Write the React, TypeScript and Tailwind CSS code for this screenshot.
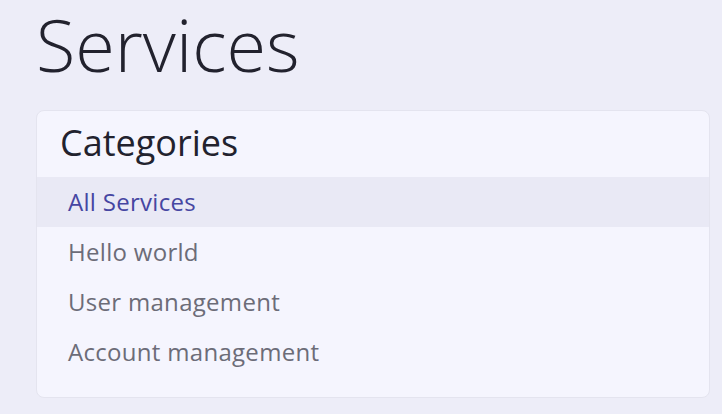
const CATEGORIES = ["All Services", "Hello world", "User management", "Account management"];

export default function App() {
  const active = "All Services";
  return (
    <div
      className="min-h-screen w-[722px] bg-[#ededf8] pl-[36px] pr-[12px] pt-[4px]"
      style={{ fontFamily: '"Open Sans", "Noto Sans", sans-serif' }}
    >
      <h1 className="text-[72px] leading-[80px] font-light text-[#22222e]">Services</h1>
      <div className="mt-[26px] rounded-[8px] border border-[#e4e4ef] bg-[#f5f5fe] pb-[20px]">
        <h2 className="px-[23px] pt-[10px] pb-[12px] text-[36px] leading-[44px] text-[#22222e]">
          Categories
        </h2>
        <ul>
          {CATEGORIES.map((c) => (
            <li
              key={c}
              className={
                c === active
                  ? "h-[50px] flex items-center px-[31px] text-[24px] tracking-[0.3px] bg-[#e9e9f5] text-[#4646a2]"
                  : "h-[50px] flex items-center px-[31px] text-[24px] tracking-[0.3px] text-[#6c6c78]"
              }
            >
              {c}
            </li>
          ))}
        </ul>
      </div>
    </div>
  );
}
